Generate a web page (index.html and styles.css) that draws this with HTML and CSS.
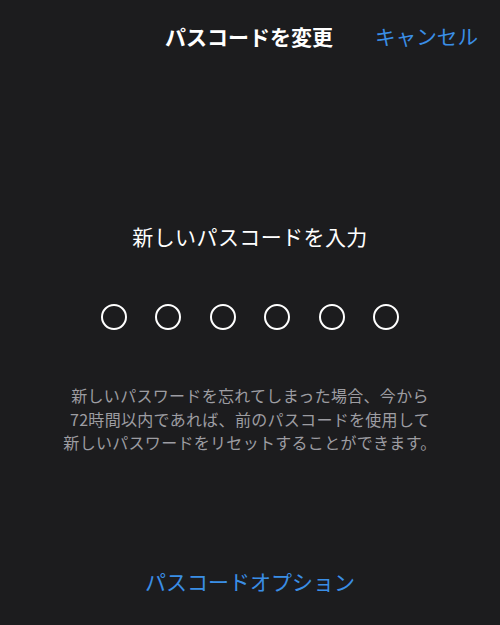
FILE: index.html
```html
<!DOCTYPE html>
<html lang="ja">
<head>
<meta charset="utf-8">
<link rel="stylesheet" href="styles.css">
</head>
<body>
<div class="screen">
  <header class="header">
    <div class="title">パスコードを変更</div>
    <div class="cancel">キャンセル</div>
  </header>
  <main class="content">
    <div class="prompt">新しいパスコードを入力</div>
    <div class="dots">
      <span class="dot"></span><span class="dot"></span><span class="dot"></span><span class="dot"></span><span class="dot"></span><span class="dot"></span>
    </div>
    <p class="note">新しいパスワードを忘れてしまった場合、今から<br>72時間以内であれば、前のパスコードを使用して<br>新しいパスワードをリセットすることができます。</p>
  </main>
  <footer class="footer">パスコードオプション</footer>
</div>
</body>
</html>
```
FILE: styles.css
```css
html, body {
  margin: 0;
  padding: 0;
  background: #1c1c1e;
}
body {
  font-family: "Noto Sans CJK JP", "Noto Sans", sans-serif;
  color: #fff;
}
.screen {
  width: 500px;
  height: 625px;
  display: flex;
  flex-direction: column;
  box-sizing: border-box;
}
.header {
  height: 76px;
  box-sizing: border-box;
  padding-bottom: 4px;
  display: flex;
  align-items: center;
  justify-content: center;
  position: relative;
}
.title {
  font-size: 21px;
  font-weight: 700;
  color: #fff;
  margin-left: -2px;
}
.cancel {
  position: absolute;
  right: 22px;
  top: 0;
  bottom: 4px;
  display: flex;
  align-items: center;
  font-size: 20.6px;
  color: #3a8ee6;
}
.content {
  display: flex;
  flex-direction: column;
  align-items: center;
  padding-top: 145px;
}
.prompt {
  font-size: 21px;
  line-height: 30px;
  letter-spacing: 0.4px;
  color: #fff;
}
.dots {
  display: flex;
  gap: 28.6px;
  margin-top: 53px;
}
.dot {
  width: 22px;
  height: 22px;
  border: 2px solid #fff;
  border-radius: 50%;
}
.note {
  margin: 54px 0 0;
  font-size: 16px;
  line-height: 23.5px;
  letter-spacing: 0.3px;
  color: #9d9da2;
  text-align: center;
}
.footer {
  margin-top: auto;
  height: 59px;
  display: flex;
  justify-content: center;
  font-size: 21px;
  color: #3a8ee6;
  line-height: 30px;
}
```
